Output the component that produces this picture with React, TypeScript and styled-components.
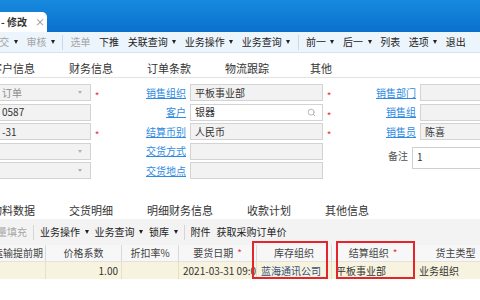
import styled, { createGlobalStyle } from 'styled-components';
import { Search } from 'lucide-react';

const Global = createGlobalStyle`
  html, body { margin: 0; padding: 0; background: #fff; overflow: hidden; }
  body { font-family: "Noto Sans CJK SC", "Noto Sans", sans-serif; }
`;

const Window = styled.div`
  width: 480px;
  height: 300px;
  overflow: hidden;
  background: #fff;
  font-size: 10px;
  color: #333;
`;

const TitleBar = styled.div`
  height: 32px;
  background: linear-gradient(#178ade, #0a70cc);
  display: flex;
  align-items: flex-end;
`;

const DocTab = styled.div`
  height: 20px;
  width: 47px;
  box-sizing: border-box;
  padding-left: 1px;
  background: #fff;
  border-radius: 0 5px 0 0;
  display: flex;
  align-items: center;
  font-weight: bold;
  color: #333;
  line-height: 14px;
  white-space: nowrap;
`;

const Close = styled.span`
  margin-left: 8px;
  color: #8a8a8a;
  font-weight: normal;
`;

const Toolbar = styled.div<{ $shift: number; $height: number; $bg: string; $line?: string }>`
  height: ${p => p.$height}px;
  margin-left: ${p => p.$shift}px;
  box-sizing: border-box;
  background: ${p => p.$bg};
  border-bottom: ${p => (p.$line ? `1px solid ${p.$line}` : 'none')};
  display: flex;
  align-items: center;
  white-space: nowrap;
`;

const ToolItem = styled.span<{ $disabled?: boolean; $pad: number }>`
  display: inline-flex;
  align-items: center;
  gap: 4.5px;
  padding: 0 ${p => p.$pad}px;
  line-height: 14px;
  color: ${p => (p.$disabled ? '#a6a6a6' : '#222')};
`;

const Caret = styled.i`
  width: 0;
  height: 0;
  border-left: 2.5px solid transparent;
  border-right: 2.5px solid transparent;
  border-top: 4px solid #222;
`;

const ToolSep = styled.span<{ $color: string }>`
  width: 1px;
  height: 15px;
  margin: 0 3px;
  background: ${p => p.$color};
`;

const TabStrip = styled.div<{ $line?: boolean; $top?: number }>`
  display: flex;
  align-items: flex-end;
  height: 25px;
  box-sizing: border-box;
  margin: ${p => p.$top ?? 0}px 0 0 -26px;
  border-bottom: ${p => (p.$line ? '1px solid #e2e2e2' : 'none')};
  font-size: 11px;
  color: #333;
  white-space: nowrap;
`;

const TabItem = styled.div<{ $min?: number }>`
  box-sizing: border-box;
  min-width: ${p => p.$min ?? 0}px;
  padding: 0 17px 1px;
  line-height: 16px;
  text-align: center;
`;

const Form = styled.div`
  display: grid;
  grid-template-columns: 94px 12px 87px 133px 12px 85px 80px;
  grid-auto-rows: 17px;
  row-gap: 2.5px;
  margin: 6px 0 0 -3px;
`;

const Field = styled.div<{ $white?: boolean }>`
  box-sizing: border-box;
  border: 1px solid #d3d3d3;
  background: ${p => (p.$white ? '#fff' : '#f2f2f2')};
  display: flex;
  align-items: center;
  padding: 0 8px 0 4px;
  line-height: 14px;
  white-space: nowrap;
  overflow: hidden;
`;

const Value = styled.span<{ $muted?: boolean }>`
  flex: 1;
  color: ${p => (p.$muted ? '#8c8c8c' : '#333')};
`;

const DropArrow = styled.i`
  width: 0;
  height: 0;
  border-left: 2.5px solid transparent;
  border-right: 2.5px solid transparent;
  border-top: 3px solid #b0b0b0;
`;

const Star = styled.span`
  color: #e23a3a;
  text-align: center;
  line-height: 17px;
  padding-top: 3px;
  box-sizing: border-box;
`;

const Label = styled.a`
  justify-self: end;
  align-self: center;
  padding-right: 4px;
  line-height: 14px;
  color: #2f8be2;
  text-decoration: underline;
  white-space: nowrap;
`;

const Remark = styled.div`
  grid-column: 6 / 8;
  grid-row: 4 / 6;
  display: flex;
  align-items: flex-start;
  gap: 4px;
  padding-top: 4.5px;
`;

const RemarkLabel = styled.span`
  width: 73px;
  text-align: right;
  line-height: 18px;
  color: #555;
`;

const TextArea = styled.div`
  flex: 1;
  height: 22px;
  box-sizing: border-box;
  border: 1px solid #cfcfcf;
  background: #fff;
  padding: 2px 4px;
  line-height: 14px;
`;

const Grid = styled.div`
  position: relative;
  margin-left: -40px;
  display: grid;
  grid-template-columns: 86px 76px 57px 78px 75px 83px 82px;
  grid-template-rows: 17px 17px;
`;

const HeadCell = styled.div<{ $align?: string }>`
  box-sizing: border-box;
  background: #f7f7f7;
  border-right: 1px solid #d9d9d9;
  border-bottom: 1px solid #e2e2e2;
  display: flex;
  align-items: center;
  justify-content: ${p => p.$align ?? 'center'};
  padding: 0 2px;
  line-height: 14px;
  color: #444;
  white-space: nowrap;
  overflow: hidden;
`;

const Req = styled.span`
  color: #e23a3a;
  margin-left: 4px;
`;

const Cell = styled.div<{ $align?: string }>`
  box-sizing: border-box;
  background: #f7f3df;
  border-right: 1px solid #e6e0c8;
  display: flex;
  align-items: center;
  justify-content: ${p => p.$align ?? 'flex-start'};
  padding: 0 3px 0 4px;
  line-height: 14px;
  color: #333;
  white-space: nowrap;
  overflow: hidden;
`;

const OrgText = styled.span`
  color: #34507a;
`;

const Highlight = styled.div<{ $left: number; $width: number }>`
  position: absolute;
  top: -4px;
  left: ${p => p.$left}px;
  width: ${p => p.$width}px;
  height: 38px;
  box-sizing: border-box;
  border: 2px solid #e2262b;
  pointer-events: none;
`;

type Tool = { text: string; caret?: boolean; disabled?: boolean } | 'sep';

const mainTools: Tool[] = [
  { text: '提交', caret: true, disabled: true },
  { text: '审核', caret: true, disabled: true },
  'sep',
  { text: '选单', disabled: true },
  { text: '下推' },
  { text: '关联查询', caret: true },
  { text: '业务操作', caret: true },
  { text: '业务查询', caret: true },
  'sep',
  { text: '前一', caret: true },
  { text: '后一', caret: true },
  { text: '列表' },
  { text: '选项', caret: true },
  { text: '退出' },
];

const entryTools: Tool[] = [
  { text: '批量填充', disabled: true },
  'sep',
  { text: '业务操作', caret: true },
  { text: '业务查询', caret: true },
  { text: '锁库', caret: true },
  'sep',
  { text: '附件' },
  { text: '获取采购订单价' },
];

const renderTools = (tools: Tool[], pad: number, sep: string) =>
  tools.map((t, i) =>
    t === 'sep' ? (
      <ToolSep key={i} $color={sep} />
    ) : (
      <ToolItem key={i} $pad={pad} $disabled={t.disabled}>
        {t.text}
        {t.caret && <Caret />}
      </ToolItem>
    )
  );

export default function App() {
  return (
    <Window>
      <Global />
      <TitleBar>
        <DocTab>
          - 修改<Close>×</Close>
        </DocTab>
      </TitleBar>

      <Toolbar $shift={-15} $height={21} $bg="#ecf4fc" $line="#d3e3f3">
        {renderTools(mainTools, 4.3, '#c9d9ea')}
      </Toolbar>

      <TabStrip $line>
        <TabItem>客户信息</TabItem>
        <TabItem>财务信息</TabItem>
        <TabItem>订单条款</TabItem>
        <TabItem>物流跟踪</TabItem>
        <TabItem $min={70}>其他</TabItem>
      </TabStrip>

      <Form>
        <Field><Value $muted>订单</Value><DropArrow /></Field>
        <Star>*</Star>
        <Label>销售组织</Label>
        <Field><Value>平板事业部</Value></Field>
        <Star>*</Star>
        <Label>销售部门</Label>
        <Field />

        <Field><Value>0587</Value></Field>
        <span />
        <Label>客户</Label>
        <Field $white>
          <Value>银器</Value>
          <Search size={9} color="#a0a0a0" strokeWidth={2} style={{ marginRight: -2 }} />
        </Field>
        <Star>*</Star>
        <Label>销售组</Label>
        <Field />

        <Field><Value>-31</Value></Field>
        <Star>*</Star>
        <Label>结算币别</Label>
        <Field><Value>人民币</Value></Field>
        <Star>*</Star>
        <Label>销售员</Label>
        <Field><Value>陈喜</Value></Field>

        <Field><Value /><DropArrow /></Field>
        <span />
        <Label>交货方式</Label>
        <Field />
        <span />
        <Remark>
          <RemarkLabel>备注</RemarkLabel>
          <TextArea>1</TextArea>
        </Remark>

        <Field><Value /><DropArrow /></Field>
        <span />
        <Label>交货地点</Label>
        <Field />
        <span />
      </Form>

      <TabStrip $top={15}>
        <TabItem>物料数据</TabItem>
        <TabItem>交货明细</TabItem>
        <TabItem>明细财务信息</TabItem>
        <TabItem>收款计划</TabItem>
        <TabItem>其他信息</TabItem>
      </TabStrip>

      <Toolbar $shift={-16} $height={26} $bg="#f3f3f3">
        {renderTools(entryTools, 3, '#d6d6d6')}
      </Toolbar>

      <Grid>
        <HeadCell $align="flex-end">运输提前期</HeadCell>
        <HeadCell>价格系数</HeadCell>
        <HeadCell>折扣率%</HeadCell>
        <HeadCell>要货日期<Req>*</Req></HeadCell>
        <HeadCell>库存组织</HeadCell>
        <HeadCell>结算组织<Req>*</Req></HeadCell>
        <HeadCell>货主类型</HeadCell>

        <Cell />
        <Cell $align="flex-end">1.00</Cell>
        <Cell />
        <Cell>2021-03-31 09:00:00</Cell>
        <Cell><OrgText>蓝海通讯公司</OrgText></Cell>
        <Cell>平板事业部</Cell>
        <Cell>业务组织</Cell>

        <Highlight $left={292} $width={76} />
        <Highlight $left={376} $width={79} />
      </Grid>
    </Window>
  );
}
